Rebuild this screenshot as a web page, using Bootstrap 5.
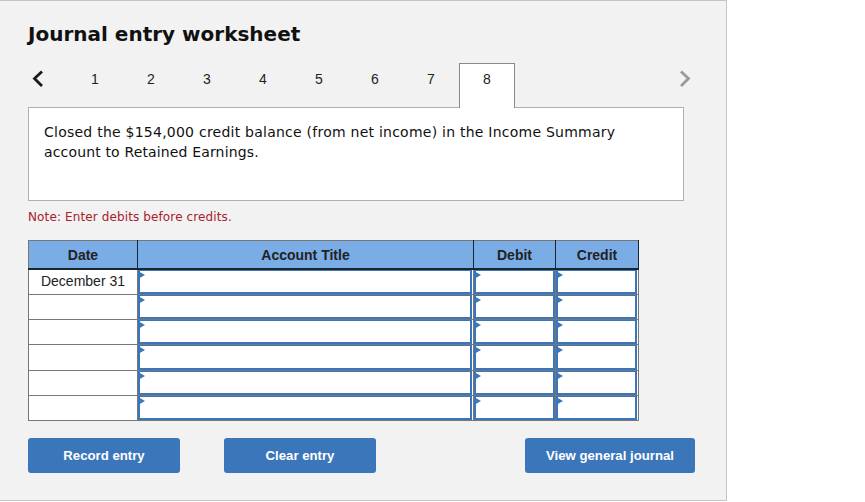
<!DOCTYPE html>
<html lang="en">
<head>
<meta charset="utf-8">
<title>Journal entry worksheet</title>
<link href="https://cdn.jsdelivr.net/npm/bootstrap@5.3.0/dist/css/bootstrap.min.css" rel="stylesheet">
<style>
html,body{background:#fff;margin:0;overflow:hidden}
.ws-panel{width:727px;height:501px;background:#f2f2f2;border:1px solid #c4c4c4;border-left:0;padding:0 31px 0 28px;box-sizing:border-box;font-family:"DejaVu Sans",Verdana,sans-serif;color:#000}
.ws-title{font-size:20px;font-weight:700;line-height:26px;margin:20px 0 0;color:#111}
.ws-tabs{height:45px;margin-top:16px;width:667px;font-family:"Liberation Sans",Arial,sans-serif;font-size:14px}
.ws-chev{width:39px;height:45px;flex:none;padding-top:5px}
.ws-tab{width:56px;height:45px;flex:none;text-align:center;line-height:33px;color:#222}
.ws-tab-on{background:#fff;border:1px solid #8a8a8a;border-bottom:0;line-height:31px;position:relative;z-index:2;height:45px}
.ws-box{height:94px;width:656px;background:#fff;border:1px solid #b0b0b0;margin-top:-1px;padding:14px 15px;font-size:14px;letter-spacing:.24px;line-height:20px;color:#111}
.ws-line2{letter-spacing:.15px}
.ws-note{font-size:12px;letter-spacing:.12px;line-height:16px;color:#a8202c;margin-top:8px}
.ws-table{border-collapse:collapse;table-layout:fixed;width:610px;margin:15px 0 0;font-family:"Liberation Sans",Arial,sans-serif;font-size:14px}
.ws-table th,.ws-table td{border:1px solid #777;padding:0;background:#fff}
.ws-table th{background:#7aade6;height:28px;text-align:center;vertical-align:middle;font-weight:700;font-size:14px;color:#222;border-right-color:#1a2630;border-top-color:#777;border-bottom:2px solid #1a2630;padding-top:3px}
.ws-table td{height:25.3px;line-height:23px;text-align:center;color:#222}
.ws-table td.ws-cell{padding:0;position:relative;vertical-align:top;background:#fff}
.ws-input{display:block;height:100%;min-height:24.3px;border:2px solid #3a76b9;border-top-width:1px;margin-right:1px;background:#fff}
.ws-table td:nth-child(3) .ws-input{margin-right:0}
.ws-flag{position:absolute;z-index:1;left:0;top:1px;width:0;height:0;border-left:7px solid #3a76b9;border-top:4px solid transparent;border-bottom:4px solid transparent}
.ws-actions{margin-top:17px;width:667px}
.ws-btn{height:35px;background:#3a76b9;border:0;border-radius:3px;color:#fff;font-family:"Liberation Sans",Arial,sans-serif;font-size:13.2px;font-weight:700;padding:0;line-height:35px}
.ws-btn:hover{background:#3a76b9;color:#fff}
.ws-w1{width:152px}.ws-w2{width:170px}
.ws-gap{gap:44px}
</style>
</head>
<body>
<div class="ws-panel">
  <h1 class="ws-title">Journal entry worksheet</h1>
  <div class="ws-tabs d-flex">
    <div class="ws-chev"><svg width="20" height="22" viewBox="0 0 20 22"><path d="M14 3.500 L6.500 10.500 L14 18" fill="none" stroke="#1a1a1a" stroke-width="2.800"/></svg></div>
    <div class="ws-tab">1</div><div class="ws-tab">2</div><div class="ws-tab">3</div><div class="ws-tab">4</div>
    <div class="ws-tab">5</div><div class="ws-tab">6</div><div class="ws-tab">7</div>
    <div class="ws-tab ws-tab-on">8</div>
    <div class="ms-auto ws-chev d-flex justify-content-end"><svg width="20" height="22" viewBox="0 0 20 22"><path d="M6 3.500 L13.500 10.500 L6 18" fill="none" stroke="#999" stroke-width="2.800"/></svg></div>
  </div>
  <div class="ws-box">Closed the $154,000 credit balance (from net income) in the Income Summary <span class="ws-line2">account to Retained Earnings.</span></div>
  <div class="ws-note">Note: Enter debits before credits.</div>
  <table class="ws-table">
    <colgroup><col style="width:109px"><col style="width:336px"><col style="width:82px"><col style="width:83px"></colgroup>
    <thead><tr><th>Date</th><th>Account Title</th><th>Debit</th><th>Credit</th></tr></thead>
    <tbody>
      <tr><td>December 31</td><td class="ws-cell"><span class="ws-flag"></span><span class="ws-input"></span></td><td class="ws-cell"><span class="ws-flag"></span><span class="ws-input"></span></td><td class="ws-cell"><span class="ws-flag"></span><span class="ws-input"></span></td></tr>
      <tr><td></td><td class="ws-cell"><span class="ws-flag"></span><span class="ws-input"></span></td><td class="ws-cell"><span class="ws-flag"></span><span class="ws-input"></span></td><td class="ws-cell"><span class="ws-flag"></span><span class="ws-input"></span></td></tr>
      <tr><td></td><td class="ws-cell"><span class="ws-flag"></span><span class="ws-input"></span></td><td class="ws-cell"><span class="ws-flag"></span><span class="ws-input"></span></td><td class="ws-cell"><span class="ws-flag"></span><span class="ws-input"></span></td></tr>
      <tr><td></td><td class="ws-cell"><span class="ws-flag"></span><span class="ws-input"></span></td><td class="ws-cell"><span class="ws-flag"></span><span class="ws-input"></span></td><td class="ws-cell"><span class="ws-flag"></span><span class="ws-input"></span></td></tr>
      <tr><td></td><td class="ws-cell"><span class="ws-flag"></span><span class="ws-input"></span></td><td class="ws-cell"><span class="ws-flag"></span><span class="ws-input"></span></td><td class="ws-cell"><span class="ws-flag"></span><span class="ws-input"></span></td></tr>
      <tr><td></td><td class="ws-cell"><span class="ws-flag"></span><span class="ws-input"></span></td><td class="ws-cell"><span class="ws-flag"></span><span class="ws-input"></span></td><td class="ws-cell"><span class="ws-flag"></span><span class="ws-input"></span></td></tr>
    </tbody>
  </table>
  <div class="ws-actions d-flex ws-gap">
    <button type="button" class="btn ws-btn ws-w1">Record entry</button>
    <button type="button" class="btn ws-btn ws-w1">Clear entry</button>
    <button type="button" class="btn ws-btn ws-w2 ms-auto">View general journal</button>
  </div>
</div>
<script src="https://cdn.jsdelivr.net/npm/bootstrap@5.3.0/dist/js/bootstrap.bundle.min.js"></script>
</body>
</html>
